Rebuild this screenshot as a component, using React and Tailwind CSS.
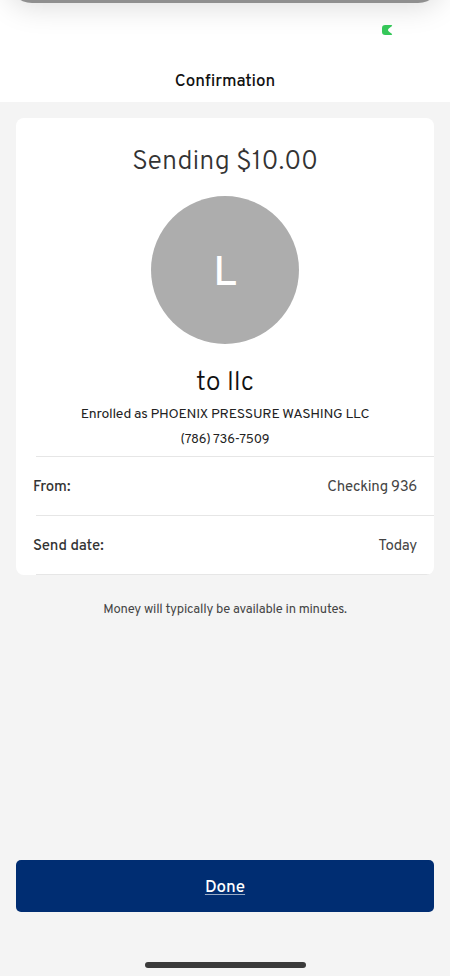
import React from 'react';

const details = [
  { label: 'From:', value: 'Checking 936' },
  { label: 'Send date:', value: 'Today' },
];

const StatusBar = () => (
  <div className="relative h-[57px] overflow-hidden">
    {/* Edge of the sheet sliding away at the top */}
    <div className="absolute left-2 right-2 -top-[77px] h-20 rounded-[24px] bg-[#8f8f8f] shadow-[0_3px_30px_rgba(0,0,0,0.15)]" />
    <svg className="absolute left-[382px] top-[25px]" width="11" height="10" viewBox="0 0 11 10">
      <path
        d="M3.2 0H9.4Q10.8 0.2 9.8 1.2L7.4 3Q4.6 5 7.4 7L9.8 8.8Q10.8 9.8 9.4 10H3.2Q0 10 0 6.8V3.2Q0 0 3.2 0Z"
        fill="#35c759"
      />
    </svg>
  </div>
);

const App = () => {
  return (
    <div className="w-[450px] h-[976px] bg-[#f4f4f4] flex flex-col overflow-hidden font-['Overpass','Inter','Open_Sans',sans-serif]">
      {/* Header */}
      <header className="h-[102px] shrink-0 bg-white">
        <StatusBar />
        <h1 className="pt-0.5 text-center text-[17px] leading-[46px] font-medium text-[#111]">Confirmation</h1>
      </header>

      {/* Transfer card */}
      <main className="mx-4 mt-4 h-[457px] shrink-0 bg-white rounded-lg overflow-hidden flex flex-col">
        <section className="h-[338px] shrink-0 flex flex-col items-center">
          <p className="mt-[27px] h-[34px] text-[27px] leading-[34px] font-[350] tracking-[-0.05px] text-[#333]">Sending $10.00</p>
          <div className="mt-[17px] size-[148px] shrink-0 rounded-full bg-[#adadad] flex items-center justify-center text-[42px] leading-none text-white">
            <span className="pt-[9px] font-medium">L</span>
          </div>
          <p className="mt-[22px] text-[27px] leading-[34px] font-[350] text-[#111]">to llc</p>
          <p className="mt-[5px] text-[14px] leading-5 tracking-[-0.25px] text-[#222]">Enrolled as PHOENIX PRESSURE WASHING LLC</p>
          <p className="mt-[5px] text-[13px] leading-5 tracking-[-0.15px] text-[#222]">(786) 736-7509</p>
        </section>
        {details.map((item) => (
          <div key={item.label}>
            <div className="ml-5 h-px bg-[#e6e6e6]" />
            <div className="h-[58px] px-[17px] pt-1 flex items-center justify-between text-[15px]">
              <span className="font-medium tracking-[-0.1px] text-[#333]">{item.label}</span>
              <span className="tracking-[-0.32px] text-[#444]">{item.value}</span>
            </div>
          </div>
        ))}
        <div className="ml-5 h-px bg-[#e6e6e6]" />
      </main>

      <p className="mt-[25px] text-center text-[13px] leading-5 tracking-[-0.18px] text-[#444]">Money will typically be available in minutes.</p>

      {/* Actions */}
      <footer className="mt-auto h-[116px] px-4 flex flex-col items-center">
        <button className="w-full h-[52px] pt-[5px] rounded-[5px] bg-[#002d72] text-white text-[17px] font-medium underline decoration-1 decoration-white/60 underline-offset-2">
          Done
        </button>
        <div className="mt-[50px] w-[161px] h-[6px] rounded-full bg-[#3b3b3b]" />
      </footer>
    </div>
  );
};

export default App;
